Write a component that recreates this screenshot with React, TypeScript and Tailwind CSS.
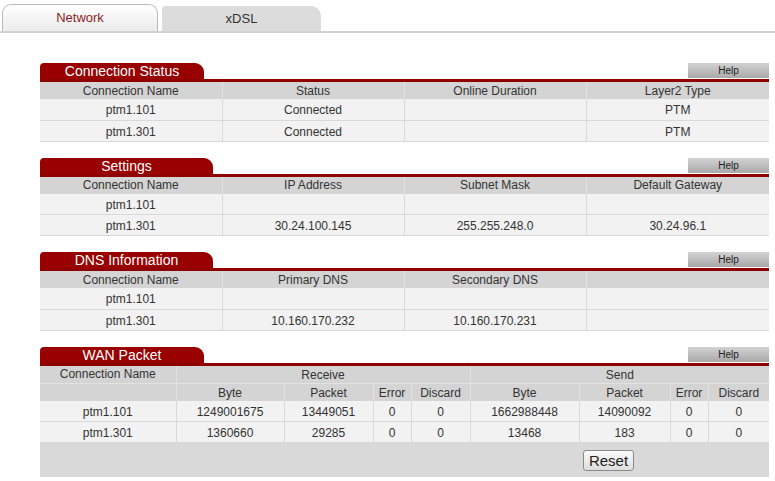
import React from 'react'

type Row = string[]

function SectionHead({ title, tabClass }: { title: string; tabClass: string }) {
  return (
    <div className="flex items-start justify-between border-b-[3px] border-[#8f0000] h-[19px]">
      <div
        className={`${tabClass} h-[16px] bg-[#990000] rounded-tl-[4px] rounded-tr-[9px] text-white text-[14px] leading-[17px] text-center`}
      >
        {title}
      </div>
      <button className="w-[81px] h-[15px] bg-gradient-to-b from-[#d2d2d2] to-[#a9a9a9] text-[10px] leading-[15px] text-[#222] text-center">
        Help
      </button>
    </div>
  )
}

function SimpleTable({ head, rows }: { head: string[]; rows: Row[] }) {
  return (
    <table className="w-[729px] table-fixed border-collapse text-[12px] text-[#333]">
      <colgroup>
        <col className="w-[182px]" />
        <col className="w-[182px]" />
        <col className="w-[182px]" />
        <col className="w-[183px]" />
      </colgroup>
      <thead>
        <tr className="bg-[#d4d4d4] h-[17px]">
          {head.map((h, i) => (
            <th key={i} className="font-normal p-0 leading-[16px] border-r border-[#e2e2e2] last:border-r-0">
              {h}
            </th>
          ))}
        </tr>
      </thead>
      <tbody>
        {rows.map((r, ri) => (
          <tr key={ri} className="bg-[#f2f2f2] h-[21px]">
            {r.map((c, ci) => (
              <td key={ci} className="p-0 pt-[2px] text-center border-b border-r border-[#d9d9d9] last:border-r-0">
                {c}
              </td>
            ))}
          </tr>
        ))}
      </tbody>
    </table>
  )
}

export default function App() {
  const wanRows = [
    ['ptm1.101', '1249001675', '13449051', '0', '0', '1662988448', '14090092', '0', '0'],
    ['ptm1.301', '1360660', '29285', '0', '0', '13468', '183', '0', '0'],
  ]

  return (
    <main className="w-[775px] h-[481px] bg-white font-['Liberation_Sans',Arial,sans-serif] overflow-hidden">
      {/* Tabs */}
      <div className="flex items-end h-[33px] border-b-2 border-[#d2d2d2] pl-[2px]">
        <div className="w-[156px] h-[27px] rounded-t-[9px] border border-b-0 border-[#b9b9b9] bg-gradient-to-b from-white to-[#ececec] text-[13px] leading-[26px] text-[#8c1d1d] text-center">
          Network
        </div>
        <div className="ml-[4px] w-[159px] h-[25px] rounded-tl-[4px] rounded-tr-[10px] bg-[#dcdcdc] text-[13px] leading-[25px] text-[#333] text-center">
          xDSL
        </div>
      </div>

      <div className="ml-[40px] mt-[30px] w-[729px] flex flex-col gap-[16px]">
        {/* Connection Status */}
        <section>
          <SectionHead title="Connection Status" tabClass="w-[164px]" />
          <SimpleTable
            head={['Connection Name', 'Status', 'Online Duration', 'Layer2 Type']}
            rows={[
              ['ptm1.101', 'Connected', '', 'PTM'],
              ['ptm1.301', 'Connected', '', 'PTM'],
            ]}
          />
        </section>

        {/* Settings */}
        <section>
          <SectionHead title="Settings" tabClass="w-[173px]" />
          <SimpleTable
            head={['Connection Name', 'IP Address', 'Subnet Mask', 'Default Gateway']}
            rows={[
              ['ptm1.101', '', '', ''],
              ['ptm1.301', '30.24.100.145', '255.255.248.0', '30.24.96.1'],
            ]}
          />
        </section>

        {/* DNS Information */}
        <section>
          <SectionHead title="DNS Information" tabClass="w-[173px]" />
          <SimpleTable
            head={['Connection Name', 'Primary DNS', 'Secondary DNS', '']}
            rows={[
              ['ptm1.101', '', '', ''],
              ['ptm1.301', '10.160.170.232', '10.160.170.231', ''],
            ]}
          />
        </section>

        {/* WAN Packet */}
        <section>
          <SectionHead title="WAN Packet" tabClass="w-[164px]" />
          <table className="w-[729px] table-fixed border-collapse text-[12px] text-[#333]">
            <colgroup>
              <col className="w-[136px]" />
              <col className="w-[108px]" />
              <col className="w-[89px]" />
              <col className="w-[38px]" />
              <col className="w-[59px]" />
              <col className="w-[109px]" />
              <col className="w-[91px]" />
              <col className="w-[38px]" />
              <col className="w-[61px]" />
            </colgroup>
            <thead>
              <tr className="bg-[#d4d4d4] h-[17px]">
                <th className="font-normal p-0 pt-[1px] leading-[15px] border-r border-b border-[#e2e2e2]">Connection Name</th>
                <th colSpan={4} className="font-normal p-0 pt-[2px] leading-[15px] border-r border-b border-[#e2e2e2]">Receive</th>
                <th colSpan={4} className="font-normal p-0 pt-[2px] leading-[15px] border-b border-[#e2e2e2]">Send</th>
              </tr>
              <tr className="bg-[#d4d4d4] h-[17px]">
                {['', 'Byte', 'Packet', 'Error', 'Discard', 'Byte', 'Packet', 'Error', 'Discard'].map((h, i) => (
                  <th key={i} className="font-normal p-0 pt-[1px] leading-[16px] border-r border-[#e2e2e2] last:border-r-0">
                    {h}
                  </th>
                ))}
              </tr>
            </thead>
            <tbody>
              {wanRows.map((r, ri) => (
                <tr key={ri} className="bg-[#f2f2f2] h-[21px]">
                  {r.map((c, ci) => (
                    <td key={ci} className="p-0 pt-[2px] text-center border-b border-r border-[#d9d9d9] last:border-r-0">
                      {c}
                    </td>
                  ))}
                </tr>
              ))}
              <tr className="bg-[#d9d9d9] h-[34px]">
                <td colSpan={9} className="p-0 pt-[2px] pl-[543px]">
                  <button className="w-[51px] h-[21px] border border-[#8a8a8a] rounded-[3px] bg-gradient-to-b from-[#fafafa] to-[#dedede] text-[15px] leading-[19px] text-[#222]">
                    Reset
                  </button>
                </td>
              </tr>
            </tbody>
          </table>
        </section>
      </div>
    </main>
  )
}
